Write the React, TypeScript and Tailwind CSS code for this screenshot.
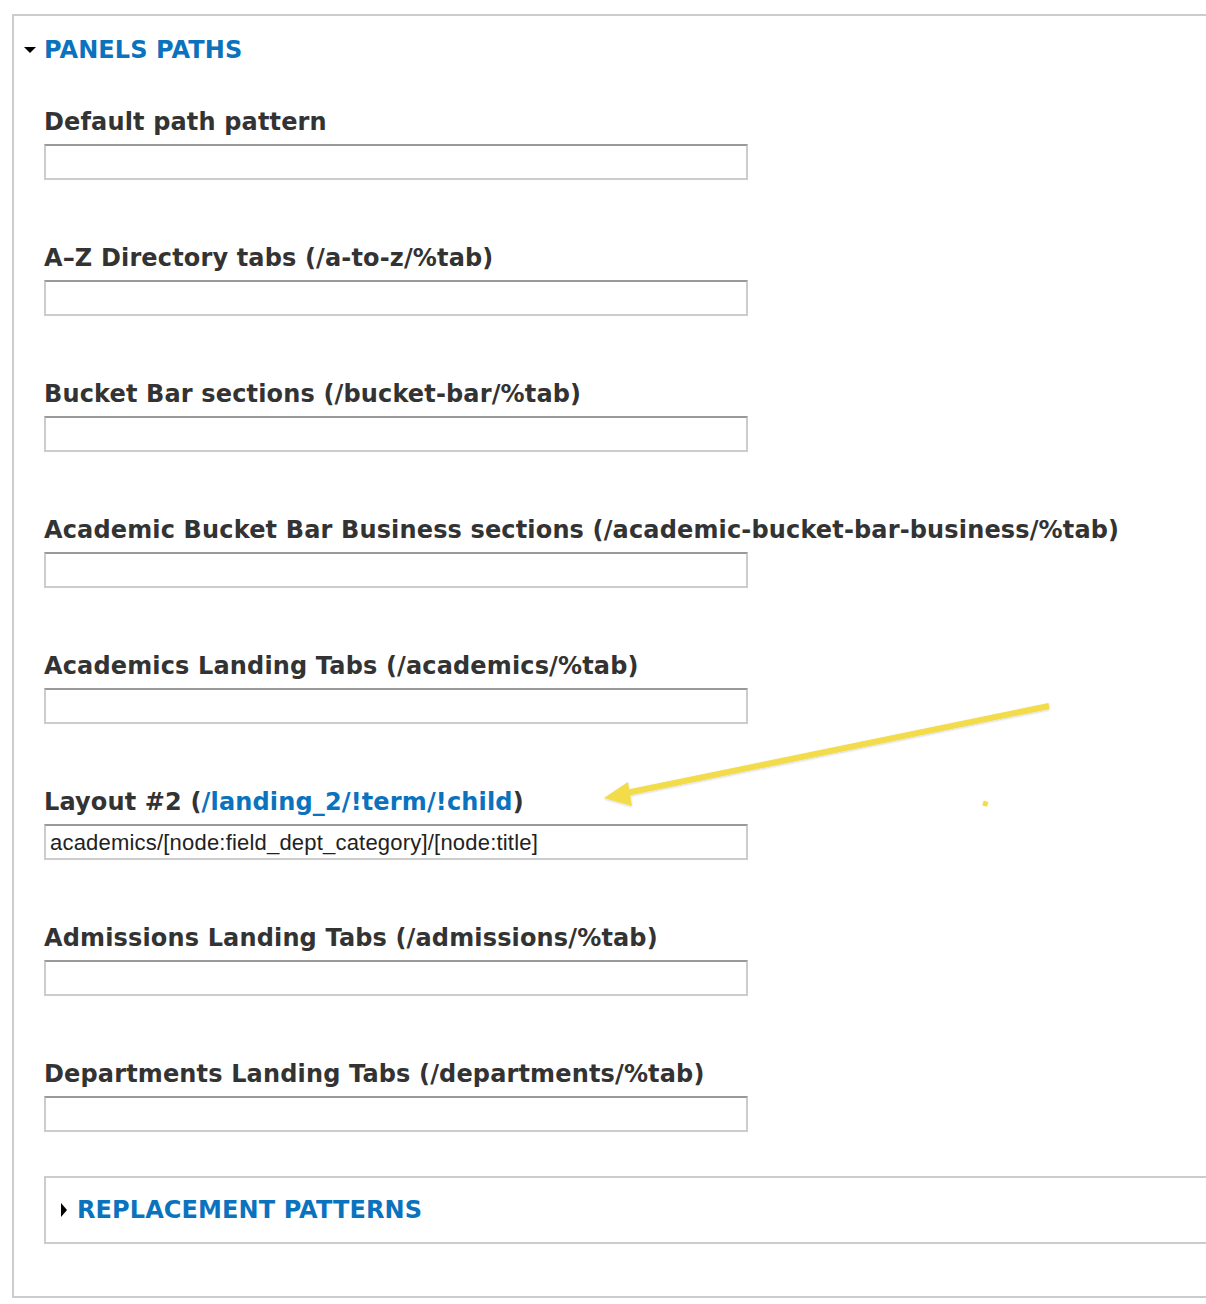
import React from "react";

const fields: { label: React.ReactNode; value?: string }[] = [
  { label: "Default path pattern" },
  { label: "A–Z Directory tabs (/a-to-z/%tab)" },
  { label: "Bucket Bar sections (/bucket-bar/%tab)" },
  { label: "Academic Bucket Bar Business sections (/academic-bucket-bar-business/%tab)" },
  { label: "Academics Landing Tabs (/academics/%tab)" },
  {
    label: (
      <>
        Layout #2 (<span className="text-[#0b72bd]">/landing_2/!term/!child</span>)
      </>
    ),
    value: "academics/[node:field_dept_category]/[node:title]",
  },
  { label: "Admissions Landing Tabs (/admissions/%tab)" },
  { label: "Departments Landing Tabs (/departments/%tab)" },
];

const labelFont = { fontFamily: '"DejaVu Sans", Verdana, sans-serif' };

export default function App() {
  return (
    <div className="relative w-[1206px] h-[1304px] bg-white overflow-hidden">
      <div className="ml-[12px] mt-[14px] h-[1284px] border-l-2 border-t-2 border-b-2 border-[#cccccc] flex flex-col">
        <div className="flex items-center h-[64px] pl-[9px] pt-[4px]">
          <svg width="14" height="10" viewBox="0 0 14 10" className="mr-[7px]">
            <polygon points="1,2 13,2 7,8" fill="#000" />
          </svg>
          <span
            className="text-[#0b72bd] font-bold text-[24px] tracking-[0.1px]"
            style={labelFont}
          >
            PANELS PATHS
          </span>
        </div>
        <div className="flex flex-col pl-[30px] pt-[25px]">
          {fields.map((f, i) => (
            <div key={i} className="flex flex-col h-[136px]">
              <div
                className="text-[#333333] font-bold text-[24px] leading-[34px] h-[34px] tracking-[0.15px]"
                style={labelFont}
              >
                {f.label}
              </div>
              <div className="mt-[5px] w-[704px] h-[36px] border-2 border-[#cccccc] border-t-[#999999] flex items-center px-[4px]">
                <span
                  className="text-[#222222] text-[22px] leading-[24px] pt-[2px] tracking-[0.2px]"
                  style={{ fontFamily: '"Liberation Sans", Arial, sans-serif' }}
                >
                  {f.value ?? ""}
                </span>
              </div>
            </div>
          ))}
          <div className="mt-[-17px] h-[68px] border-l-2 border-t-2 border-b-2 border-[#cccccc] flex items-center pl-[14px]">
            <svg width="8" height="16" viewBox="0 0 8 16" className="mr-[9px]">
              <polygon points="1,1 7,8 1,15" fill="#000" />
            </svg>
            <span
              className="text-[#0b72bd] font-bold text-[24px] tracking-[0.1px]"
              style={labelFont}
            >
              REPLACEMENT PATTERNS
            </span>
          </div>
        </div>
      </div>
      <svg
        className="absolute left-0 top-0 pointer-events-none"
        width="1206"
        height="1304"
        viewBox="0 0 1206 1304"
      >
        <defs>
          <filter id="sh" x="-10%" y="-10%" width="120%" height="120%">
            <feDropShadow dx="0" dy="1" stdDeviation="1" floodColor="#000" floodOpacity="0.18" />
          </filter>
        </defs>
        <g filter="url(#sh)">
          <line x1="1049" y1="706" x2="626" y2="793" stroke="#f2dc4a" strokeWidth="6" strokeLinecap="butt" />
          <polygon points="604,798 628,782 632,806" fill="#f2dc4a" />
        </g>
        <rect x="983" y="801" width="5" height="5" fill="#f2dc4a" transform="rotate(20 985 803)" />
      </svg>
    </div>
  );
}
